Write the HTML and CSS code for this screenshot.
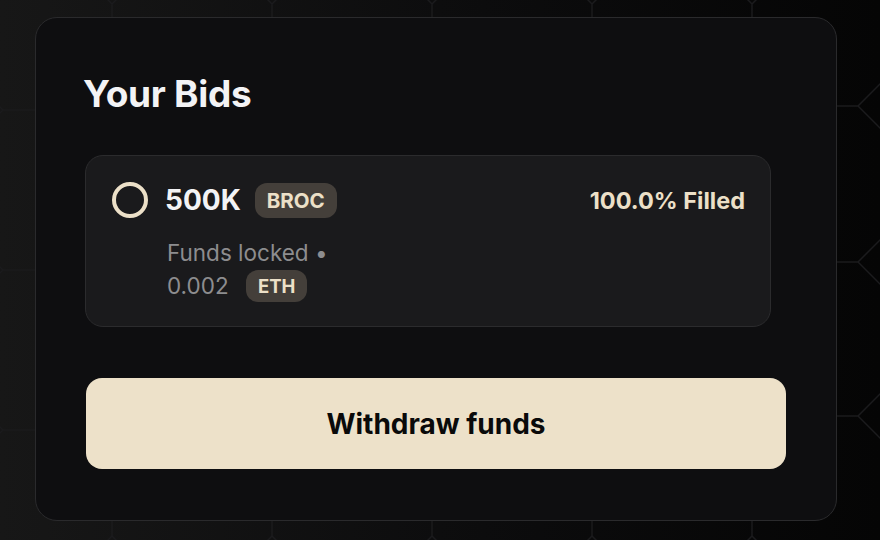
FILE: index.html
```html
<!DOCTYPE html>
<html lang="en">
<head>
  <meta charset="UTF-8">
  <title>Your Bids</title>
  <link rel="stylesheet" href="styles.css">
</head>
<body>

  <!-- faint grid lines peeking out round the card -->
  <svg class="grid-bg" width="880" height="540" viewBox="0 0 880 540">
    <g fill="none" stroke="#1b1b1d" stroke-width="1.5">
      <path d="M112 4 V20 M112 4 L106 -2 M112 4 L118 -2"/>
      <path d="M272 4 V20 M272 4 L266 -2 M272 4 L278 -2"/>
      <path d="M432 4 V20 M432 4 L426 -2 M432 4 L438 -2"/>
      <path d="M592 4 V20 M592 4 L586 -2 M592 4 L598 -2"/>
      <path d="M752 4 V20 M752 4 L746 -2 M752 4 L758 -2"/>
      <path d="M112 518 V536 M112 536 L106 542 M112 536 L118 542"/>
      <path d="M272 518 V536 M272 536 L266 542 M272 536 L278 542"/>
      <path d="M432 518 V536 M432 536 L426 542 M432 536 L438 542"/>
      <path d="M592 518 V536 M592 536 L586 542 M592 536 L598 542"/>
      <path d="M752 518 V536 M752 536 L746 542 M752 536 L758 542"/>
      <path d="M3 110 H38 M3 110 L-3 104 M3 110 L-3 116"/>
      <path d="M3 270 H38 M3 270 L-3 264 M3 270 L-3 276"/>
      <path d="M3 430 H38 M3 430 L-3 424 M3 430 L-3 436"/>
      <path d="M834 106 H858 L882 82 M858 106 L882 130"/>
      <path d="M834 262 H858 L882 238 M858 262 L882 286"/>
      <path d="M834 416 H858 L882 392 M858 416 L882 440"/>
    </g>
  </svg>

  <div class="card">
    <h2>Your Bids</h2>

    <div class="bid">
      <div class="bid-top">
        <span class="ring"></span>
        <span class="amount">500K</span>
        <span class="tag tag-lg">BROC</span>
        <span class="filled">100.0% Filled</span>
      </div>
      <div class="bid-info">
        <div>Funds locked •</div>
        <div class="locked">0.002 <span class="tag">ETH</span></div>
      </div>
    </div>

    <button class="withdraw">Withdraw funds</button>
  </div>

</body>
</html>
```

FILE: styles.css
```css
body {
  margin: 0;
  height: 540px;
  overflow: hidden;
  font-family: Inter, "Noto Sans", sans-serif;
  background: linear-gradient(90deg, #171717 0%, #0c0c0d 55%, #050505 100%);
  position: relative;
}
.grid-bg {
  position: absolute;
  left: 0;
  top: 0;
}
.card {
  position: relative;
  margin: 17px 0 0 35px;
  width: 802px;
  height: 504px;
  box-sizing: border-box;
  background: #0e0e10;
  border: 1px solid #2a2a2c;
  border-radius: 22px;
  padding: 54px 49px 0 49px;
}
h2 {
  margin: 0 0 39px -2px;
  color: #f3f3f5;
  font-size: 37px;
  font-weight: 700;
  letter-spacing: -0.3px;
  line-height: 44px;
}
.bid {
  width: 686px;
  height: 172px;
  box-sizing: border-box;
  background: #1a1a1c;
  border: 1px solid #2b2b2d;
  border-radius: 18px;
  padding: 26px 25px 0 26px;
}
.bid-top {
  display: flex;
  align-items: center;
  height: 36px;
}
.ring {
  width: 28px;
  height: 28px;
  border: 4px solid #ece0c8;
  border-radius: 50%;
  margin-right: 17px;
}
.amount {
  color: #f3f3f5;
  font-size: 28px;
  font-weight: 700;
  margin-right: 14px;
}
.tag {
  display: inline-block;
  background: #443f3a;
  color: #ece0c8;
  font-weight: 700;
  font-size: 18.5px;
  border-radius: 12px;
  padding: 5px 12px;
  line-height: 22px;
}
.tag-lg {
  padding: 6px 12px;
  font-size: 20.5px;
  line-height: 23px;
}
.filled {
  margin-left: auto;
  color: #ece0c8;
  font-size: 23.5px;
  font-weight: 700;
}
.bid-info {
  margin: 18px 0 0 55px;
  color: #8d8d8f;
  font-size: 22.5px;
  line-height: 33px;
}
.locked .tag {
  margin-left: 11px;
  vertical-align: 1px;
}
.withdraw {
  display: block;
  margin: 51px 0 0 1px;
  width: 700px;
  height: 91px;
  background: #ede1c9;
  border: none;
  border-radius: 16px;
  color: #0a0a0a;
  font-family: Inter, "Noto Sans", sans-serif;
  font-size: 28px;
  font-weight: 700;
  cursor: pointer;
}
```
